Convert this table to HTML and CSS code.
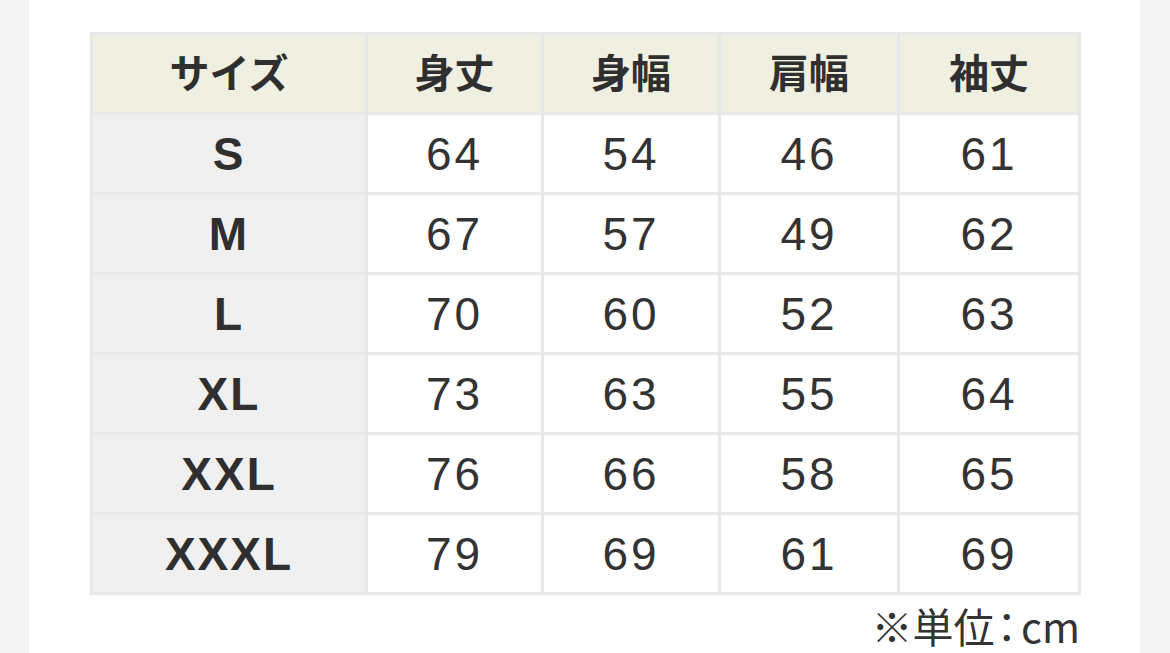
FILE: index.html
```html
<!DOCTYPE html>
<html lang="ja">
<head>
<meta charset="utf-8">
<title>サイズ表</title>
<link rel="stylesheet" href="styles.css">
</head>
<body>
<div class="panel">
  <table class="size-table">
    <colgroup>
      <col class="c-size">
      <col class="c-a">
      <col class="c-b">
      <col class="c-c">
      <col class="c-d">
    </colgroup>
    <thead>
      <tr><th>サイズ</th><th>身丈</th><th>身幅</th><th>肩幅</th><th>袖丈</th></tr>
    </thead>
    <tbody>
      <tr><th>S</th><td>64</td><td>54</td><td>46</td><td>61</td></tr>
      <tr><th>M</th><td>67</td><td>57</td><td>49</td><td>62</td></tr>
      <tr><th>L</th><td>70</td><td>60</td><td>52</td><td>63</td></tr>
      <tr><th>XL</th><td>73</td><td>63</td><td>55</td><td>64</td></tr>
      <tr><th>XXL</th><td>76</td><td>66</td><td>58</td><td>65</td></tr>
      <tr><th>XXXL</th><td>79</td><td>69</td><td>61</td><td>69</td></tr>
    </tbody>
  </table>
  <p class="note">※単位<span class="colon">：</span>cm</p>
</div>
</body>
</html>
```

FILE: styles.css
```css
html, body {
  margin: 0;
  padding: 0;
}
body {
  background: #f4f4f4;
  font-family: "Liberation Sans", "Noto Sans CJK JP", sans-serif;
  color: #333333;
  overflow: hidden;
}
.panel {
  background: #ffffff;
  margin: 0 30px 0 29px;
  padding: 32px 60px 0 61px;
  height: 621px;
}
.size-table {
  width: 988px;
  border-collapse: collapse;
  table-layout: fixed;
  border: 3px solid #e8e8e8;
}
.c-size { width: 275px; }
.c-a { width: 176px; }
.c-b { width: 177px; }
.c-c { width: 179px; }
.c-d { width: 181px; }
.size-table th,
.size-table td {
  border: 3px solid #e8e8e8;
  height: 77px;
  padding: 0;
  text-align: center;
  vertical-align: middle;
}
.size-table thead th {
  background: #efefe2;
  font-family: "Noto Sans CJK JP", sans-serif;
  font-weight: 700;
  font-size: 40px;
  color: #2f2f2f;
  height: 72px;
  padding-bottom: 5px;
}
.size-table tbody th {
  background: #f0f0f0;
  font-weight: 700;
  font-size: 46px;
  letter-spacing: 2px;
  color: #2f2f2f;
}
.size-table td {
  background: #ffffff;
  font-weight: 400;
  font-size: 46px;
  letter-spacing: 3px;
  color: #333333;
}
.note {
  margin: 10px 0 0;
  text-align: right;
  font-family: "Noto Sans CJK JP", sans-serif;
  font-size: 41px;
  line-height: 40px;
  color: #333333;
}
.colon {
  font-feature-settings: "halt";
  margin: 0 4px 0 2px;
}
```
